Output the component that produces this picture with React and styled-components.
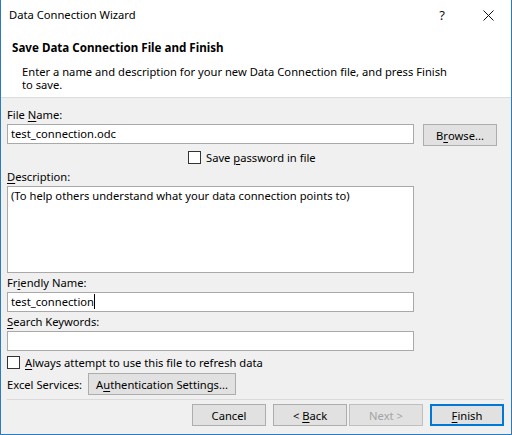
import React from 'react';
import styled, { createGlobalStyle } from 'styled-components';

const GlobalStyle = createGlobalStyle`
  html, body {
    margin: 0;
    padding: 0;
    background: #ffffff;
  }
  body {
    font-family: "Noto Sans", "Open Sans", sans-serif;
    font-size: 11.2px;
    color: #000;
  }
`;

const Window = styled.div`
  box-sizing: border-box;
  width: 512px;
  height: 435px;
  display: flex;
  flex-direction: column;
  background: #f0f0f0;
  border: 1px solid #2b7bc4;
  border-top: none;
  overflow: hidden;
`;

const TitleBar = styled.div`
  height: 30px;
  display: flex;
  align-items: center;
  background: #fff;
  padding-left: 8px;
`;

const TitleText = styled.div`
  flex: 1;
  line-height: 16px;
`;

const TitleButton = styled.div`
  width: 46px;
  height: 30px;
  display: flex;
  align-items: center;
  justify-content: center;
  font-size: 13px;
  color: #111;
`;

const Header = styled.div`
  box-sizing: border-box;
  background: #fff;
  height: 68px;
  border-bottom: 1px solid #dcdcdc;
  padding-left: 11px;
  padding-top: 10px;
`;

const HeaderTitle = styled.div`
  font-weight: bold;
  font-size: 11.6px;
  line-height: 16px;
`;

const HeaderDesc = styled.div`
  margin-top: 9px;
  padding-left: 10px;
  width: 430px;
  line-height: 13px;
`;

const Body = styled.div`
  flex: 1;
  padding: 0 7px 0 6px;
  display: flex;
  flex-direction: column;
`;

const Label = styled.div`
  margin-top: ${p => p.$mt || 0}px;
  height: 16px;
  line-height: 16px;
  white-space: nowrap;
`;

const Row = styled.div`
  display: flex;
  align-items: ${p => p.$align || 'flex-start'};
  gap: ${p => p.$gap || 0}px;
  margin-top: ${p => p.$mt || 0}px;
  justify-content: ${p => p.$justify || 'flex-start'};
`;

const ServiceLabel = styled.span`
  width: 81px;
  white-space: nowrap;
`;

const TextBox = styled.div`
  box-sizing: border-box;
  width: 407px;
  height: ${p => p.$h || 20}px;
  margin-top: ${p => p.$mt || 0}px;
  background: #fff;
  border: 1px solid #a9a9a9;
  padding: 1px 3px;
  line-height: 16px;
  white-space: nowrap;
`;

const Caret = styled.span`
  display: inline-block;
  width: 1px;
  height: 15px;
  background: #000;
  vertical-align: -3px;
`;

const Button = styled.div`
  box-sizing: border-box;
  width: ${p => p.$w || 74}px;
  height: 22px;
  margin-top: ${p => p.$mt || 0}px;
  margin-left: ${p => p.$ml || 0}px;
  display: flex;
  align-items: center;
  justify-content: center;
  background: #e1e1e1;
  border: ${p => (p.$default ? '2px' : '1px')} solid;
  border-color: ${p => (p.$disabled ? '#bfbfbf' : p.$default ? '#0078d7' : '#adadad')};
  color: ${p => (p.$disabled ? '#a3a3a3' : '#000')};
  white-space: pre;
`;

const CheckRow = styled.label`
  display: flex;
  align-items: center;
  height: 18px;
  margin-top: ${p => p.$mt || 0}px;
  margin-left: ${p => p.$ml || 0}px;
  gap: 5px;
`;

const Box = styled.span`
  box-sizing: border-box;
  width: 13px;
  height: 13px;
  background: #fff;
  border: 1px solid #333;
`;

const Separator = styled.div`
  height: 1px;
  background: #dadada;
  margin-top: 4px;
`;

const U = styled.span`
  text-decoration: underline;
  text-underline-offset: 2px;
`;

export default function App() {
  return (
    <>
      <GlobalStyle />
      <Window>
        <TitleBar>
          <TitleText>Data Connection Wizard</TitleText>
          <TitleButton>?</TitleButton>
          <TitleButton>
            <svg width="11" height="11" viewBox="0 0 11 11">
              <path d="M0.5 0.5 L10.5 10.5 M10.5 0.5 L0.5 10.5" stroke="#111" strokeWidth="1" />
            </svg>
          </TitleButton>
        </TitleBar>
        <Header>
          <HeaderTitle>Save Data Connection File and Finish</HeaderTitle>
          <HeaderDesc>
            Enter a name and description for your new Data Connection file, and press Finish to save.
          </HeaderDesc>
        </Header>
        <Body>
          <Label $mt={9}>File <U>N</U>ame:</Label>
          <Row $gap={9} $mt={1}>
            <TextBox>test_connection.odc</TextBox>
            <Button>B<U>r</U>owse...</Button>
          </Row>
          <CheckRow $mt={2} $ml={181}>
            <Box />
            <span>Save <U>p</U>assword in file</span>
          </CheckRow>
          <Label $mt={3}><U>D</U>escription:</Label>
          <TextBox $h={87} $mt={1}>(To help others understand what your data connection points to)</TextBox>
          <Label $mt={2}>Fr<U>i</U>endly Name:</Label>
          <TextBox $mt={1}>test_connection<Caret /></TextBox>
          <Label $mt={2}><U>S</U>earch Keywords:</Label>
          <TextBox $mt={1}></TextBox>
          <CheckRow $mt={2}>
            <Box />
            <span><U>A</U>lways attempt to use this file to refresh data</span>
          </CheckRow>
          <Row $align="center" $mt={2}>
            <ServiceLabel>Excel Services:</ServiceLabel>
            <Button $w={148}>A<U>u</U>thentication Settings...</Button>
          </Row>
          <Separator />
          <Row $mt={4} $justify="flex-end">
            <Button>Cancel</Button>
            <Button $ml={7}>{'< '}<U>B</U>ack</Button>
            <Button $disabled $ml={2}>Next &gt;</Button>
            <Button $default $ml={7}><U>F</U>inish</Button>
          </Row>
        </Body>
      </Window>
    </>
  );
}
